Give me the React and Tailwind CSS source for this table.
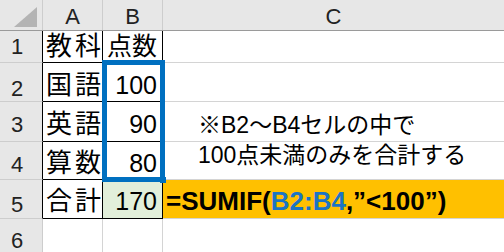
const rows = [
  { n: '1', h: 'h-[32px]', hp: 'pb-[4px]', cp: 'pb-[3px]', a: ['教', '科'], b: '点数' },
  { n: '2', h: 'h-[39px]', hp: 'pb-[1px]', cp: 'pb-[3px]', a: ['国', '語'], b: '100' },
  { n: '3', h: 'h-[40px]', hp: 'pb-[5px]', cp: 'pb-[4px]', a: ['英', '語'], b: '90' },
  { n: '4', h: 'h-[38px]', hp: 'pb-[3px]', cp: 'pb-[3px]', a: ['算', '数'], b: '80' },
  { n: '5', h: 'h-[39px]', hp: 'pb-[2px]', cp: 'pb-[4px]', a: ['合', '計'], b: '170', total: true },
]

function ColumnC({ n }) {
  if (n === '3') {
    return (
      <div className="flex-1 flex items-end pl-[35px] pb-[4px] border-b border-[#d4d4d4] text-[23px] leading-none">
        ※B2～B4セルの中で
      </div>
    )
  }
  if (n === '4') {
    return (
      <div className="flex-1 flex items-end pl-[35px] pb-[12px] border-b border-[#d4d4d4] text-[23px] leading-none">
        100点未満のみを合計する
      </div>
    )
  }
  if (n === '5') {
    return (
      <div className="flex-1 flex items-end pl-[3px] pb-[4px] bg-[#ffc000] border-b border-[#d4d4d4] text-[26px] font-bold leading-none">
        <span>=SUMIF(</span>
        <span className="text-[#1c74c4]">B2:B4</span>
        <span>,”&lt;100”)</span>
      </div>
    )
  }
  return <div className="flex-1 border-b border-[#d4d4d4]" />
}

export default function App() {
  return (
    <div className="relative w-[504px] h-[252px] overflow-hidden bg-white text-black font-['Liberation_Sans','Noto_Sans_CJK_JP',sans-serif]">
      {/* column headers */}
      <div className="flex h-[31px] bg-[#e7e7e7] border-b border-[#9a9a9a] text-[22px] leading-none text-[#222]">
        <div className="w-[43px] border-r border-[#cdcdcd]">
          <svg width="42" height="30" viewBox="0 0 42 30">
            <polygon points="14,27 37,27 37,7" fill="#b4b4b4" />
          </svg>
        </div>
        <div className="w-[60px] flex items-end justify-center pb-[2px] border-r border-[#cdcdcd]">A</div>
        <div className="w-[60px] flex items-end justify-center pb-[2px] border-r border-[#cdcdcd]">B</div>
        <div className="flex-1 flex items-end justify-center pb-[2px]">C</div>
      </div>

      {rows.map((r) => (
        <div key={r.n} className={`flex ${r.h}`}>
          <div className={`w-[43px] flex items-end justify-center pr-[8px] ${r.hp} bg-[#e7e7e7] border-r border-b border-r-black border-b-[#cdcdcd] text-[22px] leading-none text-[#222]`}>
            {r.n}
          </div>
          <div className={`w-[60px] flex items-end justify-between pl-[3px] pr-[1px] ${r.cp} border-r border-b border-black text-[26px] leading-none`}>
            <span>{r.a[0]}</span>
            <span>{r.a[1]}</span>
          </div>
          <div className={`w-[60px] flex items-end justify-end pr-[5px] ${r.cp} border-r border-b border-black text-[25px] leading-none ${r.total ? 'bg-[#e2efda]' : ''}`}>
            {r.b}
          </div>
          <ColumnC n={r.n} />
        </div>
      ))}

      <div className="flex h-[33px]">
        <div className="w-[43px] flex items-end justify-center pr-[8px] bg-[#e7e7e7] border-r border-[#cdcdcd] text-[22px] leading-none text-[#222]">
          6
        </div>
        <div className="w-[60px] border-r border-[#d4d4d4]" />
        <div className="w-[60px] border-r border-[#d4d4d4]" />
        <div className="flex-1" />
      </div>

      {/* selection frame around B2:B4 */}
      <div className="absolute left-[102px] top-[60px] w-[63px] h-[122px] border-[5px] border-[#0070c0]" />
      <div className="absolute left-[160px] top-[177px] w-[6px] h-[6px] bg-[#0070c0]" />
    </div>
  )
}
